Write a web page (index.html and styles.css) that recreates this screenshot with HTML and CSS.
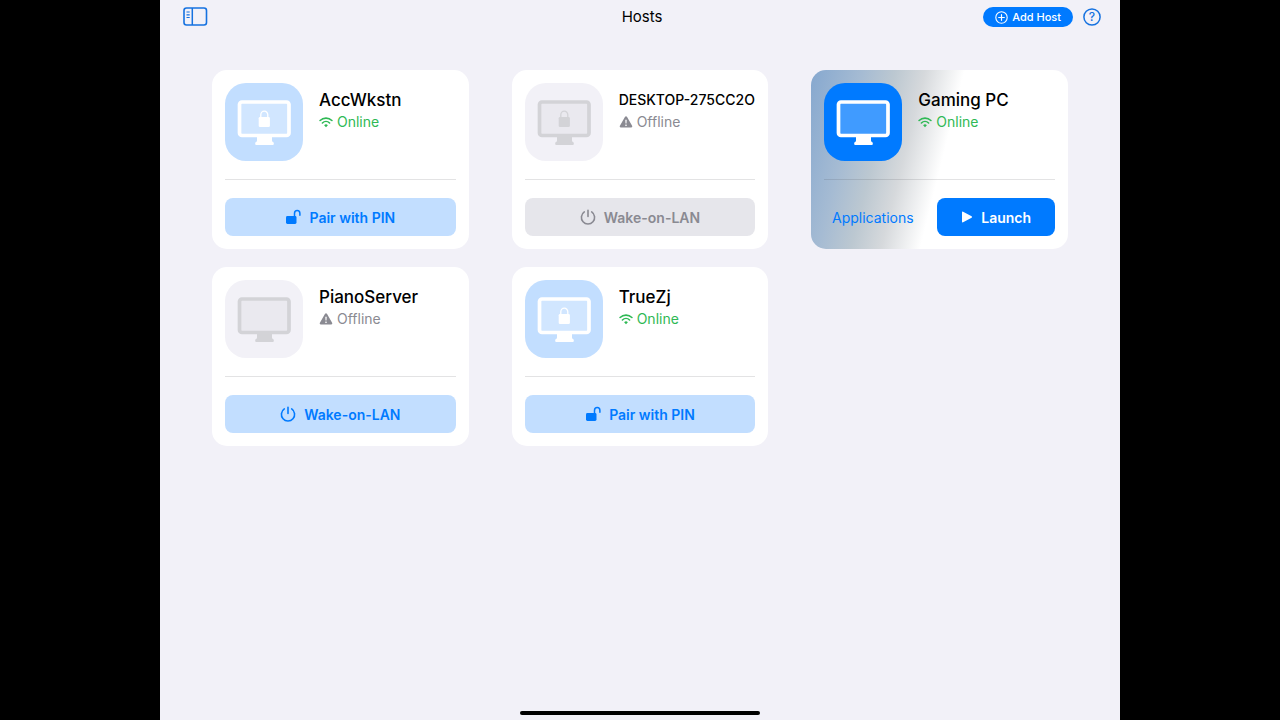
FILE: index.html
```html
<!DOCTYPE html>
<html lang="en">
<head>
    <meta charset="UTF-8">
    <meta name="viewport" content="width=device-width, initial-scale=1.0">
    <title>Hosts</title>
    <link rel="stylesheet" href="styles.css">
</head>
<body>
    <!-- Shared icons -->
    <svg class="sprite" aria-hidden="true">
        <symbol id="monitor" viewBox="0 0 78 78">
            <rect x="15" y="19" width="49" height="33" fill="currentColor" fill-opacity="0.25" />
            <rect x="14.5" y="19" width="49.5" height="33.5" rx="2.5" fill="none" stroke="currentColor" stroke-width="3.7" />
            <path fill="currentColor" d="M32 54h15v3.5q0 1.2 1 1.5q.8.3.8 1.3v.7q0 1-1 1H31.2q-1 0-1-1v-.7q0-1 .8-1.3q1-.3 1-1.5z" />
        </symbol>
        <symbol id="monitor-lock" viewBox="0 0 78 78">
            <rect x="33.7" y="34" width="11.2" height="10" rx="1.3" fill="currentColor" />
            <path d="M35.8 35v-3.2a3.5 3.7 0 0 1 7 0V35" fill="none" stroke="currentColor" stroke-width="1.3" />
        </symbol>
        <symbol id="wifi" viewBox="0 0 14 12">
            <g fill="none" stroke="currentColor" stroke-width="1.6" stroke-linecap="round">
                <path d="M1.1 4.5a8.4 8.4 0 0 1 11.8 0" />
                <path d="M3.4 7a5.2 5.2 0 0 1 7.2 0" />
            </g>
            <path fill="currentColor" d="M7 11.2L5.1 9.2a2.7 2.7 0 0 1 3.8 0z" />
        </symbol>
        <symbol id="warning" viewBox="0 0 14 12">
            <path fill="currentColor" fill-rule="evenodd" d="M5.9 1.1q1.1-1.5 2.2 0l5 8.6q.7 1.7-1.1 1.9H2q-1.8-.2-1.1-1.9zM6.3 3.8l.2 3.8h1l.2-3.8zM7 8.4a.8.8 0 1 0 .01 0z" />
        </symbol>
        <symbol id="unlock" viewBox="0 0 16 16">
            <rect x="1" y="7" width="10.5" height="8" rx="1.4" fill="currentColor" />
            <path d="M9.5 7.5V4.4a2.7 2.9 0 0 1 5.4 0V6.3" fill="none" stroke="currentColor" stroke-width="1.5" stroke-linecap="round" />
        </symbol>
        <symbol id="power" viewBox="0 0 16 16">
            <path d="M4.3 2.9a6.6 6.6 0 1 0 7.4 0M8 1.2v6.3" fill="none" stroke="currentColor" stroke-width="1.6" stroke-linecap="round" />
        </symbol>
        <symbol id="play" viewBox="0 0 12 12">
            <path fill="currentColor" d="M1 1.4q0-1.2 1.1-.7l8.5 4.6q1 .7 0 1.4l-8.5 4.6q-1.1.5-1.1-.7z" />
        </symbol>
    </svg>

    <div class="screen">
        <header class="toolbar">
            <button type="button" class="icon-btn" aria-label="Toggle sidebar">
                <svg width="25" height="20" viewBox="0 0 25 20" fill="none" stroke="currentColor">
                    <rect x="1" y="1" width="22.5" height="17" rx="2.5" stroke-width="1.6" />
                    <path d="M9.3 1v17" stroke-width="1.5" />
                    <path d="M3.5 5h3.2M3.5 7.8h3.2M3.5 10.5h3.2" stroke-width="1.2" />
                </svg>
            </button>
            <h1>Hosts</h1>
            <div class="actions">
                <button type="button" class="add-btn">
                    <svg width="13" height="13" viewBox="0 0 13 13" fill="none" stroke="currentColor" stroke-linecap="round">
                        <circle cx="6.5" cy="6.5" r="5.7" stroke-width="1.1" />
                        <path d="M6.5 3.7v5.6M3.7 6.5h5.6" stroke-width="1.2" />
                    </svg>
                    Add Host
                </button>
                <button type="button" class="icon-btn" aria-label="Help">
                    <svg width="18" height="18" viewBox="0 0 18 18">
                        <circle cx="9" cy="9" r="8.1" fill="none" stroke="currentColor" stroke-width="1.5" />
                        <text x="9" y="13" text-anchor="middle">?</text>
                    </svg>
                </button>
            </div>
        </header>

        <main class="hosts">
            <article class="card online">
                <div class="host">
                    <div class="tile">
                        <svg><use href="#monitor" /></svg>
                        <svg><use href="#monitor-lock" /></svg>
                    </div>
                    <div class="info">
                        <h2>AccWkstn</h2>
                        <p class="status"><svg><use href="#wifi" /></svg>Online</p>
                    </div>
                </div>
                <div class="card-actions">
                    <button type="button" class="btn"><svg><use href="#unlock" /></svg>Pair with PIN</button>
                </div>
            </article>

            <article class="card offline">
                <div class="host">
                    <div class="tile">
                        <svg><use href="#monitor" /></svg>
                        <svg><use href="#monitor-lock" /></svg>
                    </div>
                    <div class="info">
                        <h2 class="long-name">DESKTOP-275CC2O</h2>
                        <p class="status"><svg><use href="#warning" /></svg>Offline</p>
                    </div>
                </div>
                <div class="card-actions">
                    <button type="button" class="btn" disabled><svg><use href="#power" /></svg>Wake-on-LAN</button>
                </div>
            </article>

            <article class="card online active">
                <div class="host">
                    <div class="tile">
                        <svg><use href="#monitor" /></svg>
                    </div>
                    <div class="info">
                        <h2>Gaming PC</h2>
                        <p class="status"><svg><use href="#wifi" /></svg>Online</p>
                    </div>
                </div>
                <div class="card-actions">
                    <button type="button" class="btn btn-plain">Applications</button>
                    <button type="button" class="btn btn-primary"><svg><use href="#play" /></svg>Launch</button>
                </div>
            </article>

            <article class="card offline">
                <div class="host">
                    <div class="tile">
                        <svg><use href="#monitor" /></svg>
                    </div>
                    <div class="info">
                        <h2>PianoServer</h2>
                        <p class="status"><svg><use href="#warning" /></svg>Offline</p>
                    </div>
                </div>
                <div class="card-actions">
                    <button type="button" class="btn"><svg><use href="#power" /></svg>Wake-on-LAN</button>
                </div>
            </article>

            <article class="card online">
                <div class="host">
                    <div class="tile">
                        <svg><use href="#monitor" /></svg>
                        <svg><use href="#monitor-lock" /></svg>
                    </div>
                    <div class="info">
                        <h2>TrueZj</h2>
                        <p class="status"><svg><use href="#wifi" /></svg>Online</p>
                    </div>
                </div>
                <div class="card-actions">
                    <button type="button" class="btn"><svg><use href="#unlock" /></svg>Pair with PIN</button>
                </div>
            </article>
        </main>

        <div class="home-indicator"></div>
    </div>
</body>
</html>
```
FILE: styles.css
```css
:root {
    --blue: #007aff;
    --light-blue: #c2deff;
    --green: #2fb955;
    --gray: #8a8a92;
    --page-bg: #f2f1f8;
}

* {
    margin: 0;
    padding: 0;
    box-sizing: border-box;
}

body {
    background: #000;
    color: #000;
    font-family: Inter, "Liberation Sans", sans-serif;
}

button {
    border: none;
    background: none;
    font: inherit;
    color: var(--blue);
    cursor: pointer;
}

.sprite {
    display: none;
}

.screen {
    display: flex;
    flex-direction: column;
    width: 75%;
    min-height: 100vh;
    margin: 0 auto;
    background: var(--page-bg);
}

/* Toolbar */
.toolbar {
    display: grid;
    grid-template-columns: 1fr auto 1fr;
    align-items: center;
    height: 34px;
    padding: 0 19px 0 23px;
}

.toolbar h1 {
    padding-bottom: 2px;
    font-size: 15px;
    font-weight: 400;
}

.icon-btn {
    display: flex;
    color: #1672e0;
}

.icon-btn text {
    fill: currentColor;
    font-size: 12px;
    font-weight: 500;
}

.actions {
    display: flex;
    justify-content: flex-end;
    align-items: center;
    gap: 10px;
}

.add-btn {
    display: flex;
    align-items: center;
    gap: 4px;
    height: 20px;
    padding: 0 12px;
    border-radius: 10px;
    background: var(--blue);
    color: #fff;
    font-size: 11px;
    font-weight: 500;
}

/* Host grid */
.hosts {
    display: grid;
    grid-template-columns: repeat(3, minmax(0, 1fr));
    gap: 18px 43px;
    padding: 36px 52px;
}

.card {
    padding: 13px;
    border-radius: 15px;
    background: #fff;
}

.card.active {
    background: linear-gradient(104deg, #86a8cf 0%, #a5bbd3 17%, #bcc8d1 28%, #d6d9dc 38%, #fff 51%);
}

.host {
    display: flex;
    gap: 16px;
    padding-bottom: 18px;
    border-bottom: 1px solid rgba(60, 60, 67, 0.14);
}

.tile {
    display: grid;
    flex: none;
    width: 78px;
    height: 78px;
    border-radius: 21px;
    background: var(--light-blue);
    color: #fff;
}

.tile svg {
    grid-area: 1 / 1;
    width: 78px;
    height: 78px;
}

.offline .tile {
    background: #f2f1f7;
    color: #d3d3d7;
}

.active .tile {
    background: var(--blue);
}

.info {
    padding-top: 6px;
}

.info h2 {
    font-size: 17px;
    font-weight: 500;
    line-height: 22px;
    white-space: nowrap;
}

.info .long-name {
    font-size: 14px;
}

.status {
    display: flex;
    align-items: center;
    gap: 4px;
    color: var(--green);
    font-size: 14px;
    line-height: 22px;
}

.status svg {
    width: 14px;
    height: 12px;
}

.offline .status {
    color: var(--gray);
}

/* Card buttons */
.card-actions {
    display: flex;
    gap: 16px;
    padding-top: 18px;
}

.btn {
    display: flex;
    flex: 1;
    justify-content: center;
    align-items: center;
    gap: 8px;
    height: 38px;
    border-radius: 8px;
    background: var(--light-blue);
    font-size: 14px;
    font-weight: 600;
}

.btn svg {
    width: 16px;
    height: 16px;
}

.btn:disabled {
    background: #e6e6eb;
    color: var(--gray);
    cursor: default;
}

.btn-plain {
    background: none;
    font-weight: 400;
}

.btn-primary {
    flex: none;
    width: 51%;
    background: var(--blue);
    color: #fff;
}

.btn-primary svg {
    width: 12px;
    height: 12px;
}

.home-indicator {
    width: 25%;
    height: 4px;
    margin: auto auto 5px;
    border-radius: 2px;
    background: #000;
}
```
